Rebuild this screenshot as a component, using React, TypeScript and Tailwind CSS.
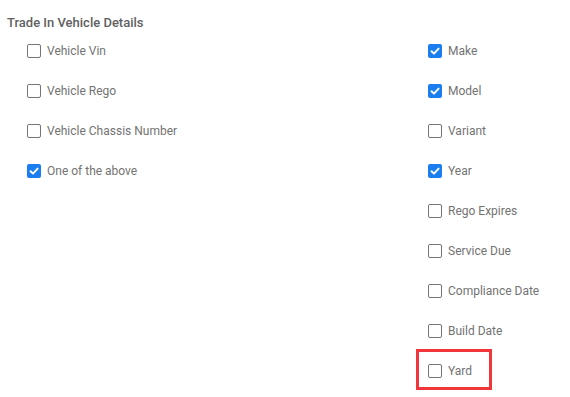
import React from 'react';

type Item = { label: string; checked: boolean; highlight?: boolean };

const leftItems: Item[] = [
  { label: 'Vehicle Vin', checked: false },
  { label: 'Vehicle Rego', checked: false },
  { label: 'Vehicle Chassis Number', checked: false },
  { label: 'One of the above', checked: true },
];

const rightItems: Item[] = [
  { label: 'Make', checked: true },
  { label: 'Model', checked: true },
  { label: 'Variant', checked: false },
  { label: 'Year', checked: true },
  { label: 'Rego Expires', checked: false },
  { label: 'Service Due', checked: false },
  { label: 'Compliance Date', checked: false },
  { label: 'Build Date', checked: false },
  { label: 'Yard', checked: false, highlight: true },
];

const Box = ({ checked }: { checked: boolean }) =>
  checked ? (
    <span className="w-[14px] h-[14px] rounded-[2px] bg-[#1a7ef0] flex items-center justify-center shrink-0">
      <svg width="10" height="10" viewBox="0 0 10 10" fill="none">
        <path d="M1.5 5.2 L4 7.6 L8.6 2.6" stroke="white" strokeWidth="1.9" strokeLinecap="round" strokeLinejoin="round" />
      </svg>
    </span>
  ) : (
    <span className="w-[14px] h-[14px] rounded-[2px] border border-[#757575] bg-white shrink-0" />
  );

const Row = ({ item }: { item: Item }) => (
  <div className="relative h-[40px] flex items-center gap-[6px]">
    {item.highlight && (
      <span className="absolute left-[-12px] top-[-2px] w-[76px] h-[41px] border-[3px] border-[#f0353b]" />
    )}
    <Box checked={item.checked} />
    <span className="text-[12px] text-[#737373] leading-none">{item.label}</span>
  </div>
);

export default function App() {
  return (
    <div
      className="w-[570px] h-[397px] bg-white overflow-hidden"
      style={{ fontFamily: 'Roboto, "Liberation Sans", sans-serif' }}
    >
      <h3 className="pl-[7px] pt-[15px] text-[13px] font-medium text-[#616161] leading-[15px]">
        Trade In Vehicle Details
      </h3>
      <div className="flex pt-[1px]">
        <div className="w-[428px] pl-[27px]">
          {leftItems.map((it) => (
            <Row key={it.label} item={it} />
          ))}
        </div>
        <div className="flex-1">
          {rightItems.map((it) => (
            <Row key={it.label} item={it} />
          ))}
        </div>
      </div>
    </div>
  );
}
